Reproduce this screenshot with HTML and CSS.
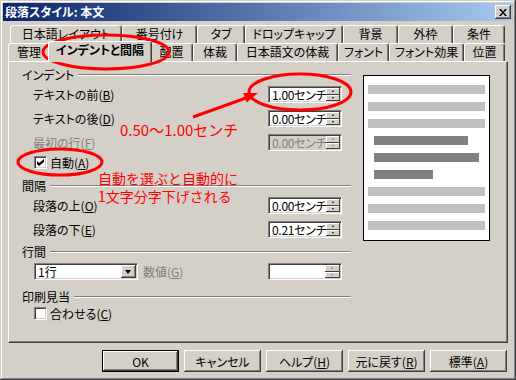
FILE: index.html
```html
<!DOCTYPE html>
<html>
<head>
    <meta charset="utf-8">
    <link rel="stylesheet" href="styles.css">
</head>

<body>

<div class="window">

    <div class="titlebar">
        <span class="title">段落スタイル: 本文</span>
        <button class="close">
            <svg width="8" height="7" viewBox="0 0 8 7"><path d="M0 0h2l2 2.5 2-2.5h2l-3 3.5 3 3.5h-2l-2-2.5-2 2.5h-2l3-3.5z" fill="#000"/></svg>
        </button>
    </div>

    <!-- TABS -->
    <div class="tabs">
        <div class="tabrow back">
            <div class="tab">日本語レイアウト</div>
            <div class="tab">番号付け</div>
            <div class="tab">タブ</div>
            <div class="tab">ドロップキャップ</div>
            <div class="tab">背景</div>
            <div class="tab">外枠</div>
            <div class="tab">条件</div>
        </div>
        <div class="tabrow front">
            <div class="tab">管理</div>
            <div class="tab selected">インデントと間隔</div>
            <div class="tab">配置</div>
            <div class="tab">体裁</div>
            <div class="tab">日本語文の体裁</div>
            <div class="tab">フォント</div>
            <div class="tab">フォント効果</div>
            <div class="tab">位置</div>
        </div>
    </div>

    <div class="panel">
        <div class="settings">

            <div class="heading"><span>インデント</span><i class="etch"></i></div>
            <div class="row first">
                <span class="label">テキストの前(<u>B</u>)</span>
                <div class="spin"><span class="value">1.00センチ</span><span class="arrows"><b></b><b></b></span></div>
            </div>
            <div class="row">
                <span class="label">テキストの後(<u>D</u>)</span>
                <div class="spin"><span class="value">0.00センチ</span><span class="arrows"><b></b><b></b></span></div>
            </div>
            <div class="row">
                <span class="label off">最初の行(<u>F</u>)</span>
                <div class="spin disabled"><span class="value">0.00センチ</span><span class="arrows"><b></b><b></b></span></div>
            </div>
            <div class="check-row auto">
                <span class="checkbox">
                    <svg width="7" height="7" viewBox="0 0 7 7"><path d="M0 2l2 2 5-4v3l-5 4-2-2z" fill="#000"/></svg>
                </span>
                <span class="label">自動(<u>A</u>)</span>
            </div>

            <div class="heading spaced"><span>間隔</span><i class="etch"></i></div>
            <div class="row first">
                <span class="label">段落の上(<u>O</u>)</span>
                <div class="spin"><span class="value">0.00センチ</span><span class="arrows"><b></b><b></b></span></div>
            </div>
            <div class="row">
                <span class="label">段落の下(<u>E</u>)</span>
                <div class="spin"><span class="value">0.21センチ</span><span class="arrows"><b></b><b></b></span></div>
            </div>

            <div class="heading"><span>行間</span><i class="etch"></i></div>
            <div class="row first combo-row">
                <div class="combo"><span class="value">1行</span><span class="drop"></span></div>
                <span class="label off">数値(<u>G</u>)</span>
                <div class="spin blank"><span class="value"></span><span class="arrows"><b></b><b></b></span></div>
            </div>

            <div class="heading spaced"><span>印刷見当</span><i class="etch"></i></div>
            <div class="check-row register">
                <span class="checkbox"></span>
                <span class="label">合わせる(<u>C</u>)</span>
            </div>
        </div>

        <!-- PREVIEW -->
        <div class="preview">
            <i class="bar"></i>
            <i class="bar"></i>
            <i class="bar"></i>
            <i class="bar dark long"></i>
            <i class="bar dark longer"></i>
            <i class="bar dark short"></i>
            <i class="bar"></i>
            <i class="bar"></i>
            <i class="bar"></i>
        </div>
    </div>

    <div class="buttons">
        <button class="btn default">OK</button>
        <button class="btn">キャンセル</button>
        <button class="btn">ヘルプ(<u>H</u>)</button>
        <button class="btn">元に戻す(<u>R</u>)</button>
        <button class="btn">標準(<u>A</u>)</button>
    </div>

    <!-- RED NOTES -->
    <svg class="marks" width="516" height="380" viewBox="0 0 516 380">
        <ellipse cx="106" cy="52" rx="63" ry="17"/>
        <ellipse cx="300" cy="92" rx="51" ry="18"/>
        <ellipse cx="60" cy="162" rx="42" ry="13"/>
        <line x1="193" y1="117" x2="246" y2="98"/>
        <polygon class="head" points="258,93 246.6,102.5 243.2,93.1"/>
    </svg>
    <div class="note range">0.50～1.00センチ</div>
    <div class="note auto-note">自動を選ぶと自動的に<br>1文字分字下げされる</div>

</div>

</body>
</html>
```

FILE: styles.css
```css
body {
    margin: 0;
    background-color: #d4d0c8;
    font-family: "Noto Sans CJK JP", sans-serif;
    font-size: 12px;
    font-feature-settings: "palt";
    color: #000;
}

u {
    text-decoration: underline;
    text-underline-offset: 1px;
}

.window {
    position: relative;
    width: 516px;
    height: 380px;
    box-sizing: border-box;
    padding: 3px;
    background-color: #d4d0c8;
    box-shadow: inset -1px -1px #404040, inset 1px 1px #d4d0c8,
                inset -2px -2px #808080, inset 2px 2px #fff;
}

.titlebar {
    height: 18px;
    display: flex;
    align-items: center;
    padding-left: 2px;
    background: linear-gradient(to right, #0a246a, #a6caf0);
}

.title {
    color: #fff;
    font-weight: bold;
    line-height: 18px;
}

.close {
    margin-left: auto;
    margin-right: 2px;
    width: 16px;
    height: 14px;
    padding: 0;
    border: none;
    display: flex;
    align-items: center;
    justify-content: center;
    background-color: #d4d0c8;
    box-shadow: inset -1px -1px #404040, inset 1px 1px #fff, inset -2px -2px #808080;
}

/* tabs */
.tabs {
    margin-top: 4px;
}

.tabrow {
    display: grid;
    height: 18px;
}

.tabrow.back {
    margin-left: 7px;
    grid-template-columns: 112px 75px 48px 98px 55px 55px 52px;
}

.tabrow.front {
    margin-left: 5px;
    grid-template-columns: 42px 100px 43px 44px 101px 51px 75px 41px;
}

.tab {
    box-sizing: border-box;
    height: 18px;
    border: 1px solid #fff;
    border-right-color: #404040;
    border-bottom: none;
    border-radius: 3px 3px 0 0;
    box-shadow: inset -1px 0 #808080;
    text-align: center;
    line-height: 16px;
    white-space: nowrap;
    background-color: #d4d0c8;
}

.tab.selected {
    position: relative;
    z-index: 1;
    height: 21px;
    margin: -2px -2px 0;
    font-weight: bold;
}

/* panel */
.panel {
    margin: 0 5px;
    height: 282px;
    box-sizing: border-box;
    display: flex;
    align-items: flex-start;
    padding: 6px 0 0 13px;
    border: 1px solid #fff;
    border-right-color: #404040;
    border-bottom-color: #404040;
    box-shadow: inset -1px -1px #808080;
}

.settings {
    width: 329px;
    display: flex;
    flex-direction: column;
}

.heading {
    height: 14px;
    line-height: 14px;
    display: flex;
    align-items: center;
    margin-top: 7px;
}

.heading:first-child {
    margin-top: 0;
}

.heading.spaced {
    margin-top: 10px;
}

.etch {
    flex: 1;
    margin-left: 4px;
    height: 0;
    border-top: 1px solid #808080;
    border-bottom: 1px solid #fff;
}

.row {
    height: 17px;
    display: flex;
    align-items: center;
    margin-top: 7px;
    padding: 0 9px 0 11px;
}

.row.first {
    margin-top: 4px;
}

.label {
    flex: 1;
    white-space: nowrap;
}

.off {
    color: #808080;
}

.spin {
    width: 74px;
    height: 17px;
    box-sizing: border-box;
    display: flex;
    padding: 1px;
    background-color: #fff;
    border: 1px solid #808080;
    border-right-color: #fff;
    border-bottom-color: #fff;
    box-shadow: inset 1px 1px #404040, inset -1px -1px #d4d0c8;
}

.spin .value {
    flex: 1;
    padding-left: 2px;
    line-height: 13px;
    white-space: nowrap;
    letter-spacing: -0.3px;
}

.spin.disabled {
    background-color: #d4d0c8;
}

.spin.disabled .value {
    color: #808080;
}

.arrows {
    width: 15px;
    display: flex;
    flex-direction: column;
}

.arrows b {
    flex: 1;
    position: relative;
    background-color: #d4d0c8;
    box-shadow: inset -1px -1px #404040, inset 1px 1px #fff;
}

.arrows b::after {
    content: "";
    position: absolute;
    left: 6px;
    top: 2px;
    border-left: 1.5px solid transparent;
    border-right: 1.5px solid transparent;
    border-bottom: 2px solid #000;
}

.arrows b + b::after {
    border-bottom: none;
    border-top: 2px solid #000;
}

.spin.disabled .arrows b::after,
.spin.blank .arrows b::after {
    border-bottom-color: #808080;
    border-top-color: #808080;
}

/* combo */
.combo-row {
    padding-left: 12px;
}

.combo-row .label {
    flex: none;
    margin-left: 5px;
    margin-right: auto;
}

.combo {
    width: 104px;
    height: 17px;
    box-sizing: border-box;
    display: flex;
    padding: 1px;
    background-color: #fff;
    border: 1px solid #808080;
    border-right-color: #fff;
    border-bottom-color: #fff;
    box-shadow: inset 1px 1px #404040, inset -1px -1px #d4d0c8;
}

.combo .value {
    flex: 1;
    padding-left: 2px;
    line-height: 13px;
}

.drop {
    width: 15px;
    position: relative;
    background-color: #d4d0c8;
    box-shadow: inset -1px -1px #404040, inset 1px 1px #fff, inset -2px -2px #808080;
}

.drop::after {
    content: "";
    position: absolute;
    left: 4px;
    top: 5px;
    border-left: 3.5px solid transparent;
    border-right: 3.5px solid transparent;
    border-top: 4px solid #000;
}

/* checkboxes */
.check-row {
    display: flex;
    align-items: center;
    height: 13px;
    padding-left: 12px;
    gap: 3px;
}

.check-row.auto {
    margin-top: 5px;
}

.check-row.register {
    margin-top: 3px;
}

.checkbox {
    width: 13px;
    height: 13px;
    box-sizing: border-box;
    display: flex;
    align-items: center;
    justify-content: center;
    background-color: #fff;
    border: 1px solid #808080;
    border-right-color: #fff;
    border-bottom-color: #fff;
    box-shadow: inset 1px 1px #404040, inset -1px -1px #d4d0c8;
}

/* preview */
.preview {
    width: 127px;
    height: 166px;
    box-sizing: border-box;
    margin: 7px 0 0 12px;
    padding: 9px 4px 0;
    display: flex;
    flex-direction: column;
    gap: 8px;
    background-color: #fff;
    border: 1px solid #000;
}

.bar {
    height: 9px;
    background-color: #c0c0c0;
}

.bar.dark {
    background-color: #808080;
    margin-left: 6px;
}

.bar.long {
    width: 94px;
}

.bar.longer {
    width: 105px;
}

.bar.short {
    width: 59px;
}

/* buttons */
.buttons {
    margin-top: 7px;
    display: flex;
    justify-content: flex-end;
    gap: 5px;
    padding-right: 6px;
}

.btn {
    width: 77px;
    height: 22px;
    padding: 0;
    border: none;
    font: inherit;
    color: #000;
    background-color: #d4d0c8;
    box-shadow: inset -1px -1px #404040, inset 1px 1px #fff, inset -2px -2px #808080;
}

.btn.default {
    border: 1px solid #000;
}

/* red notes */
.marks {
    position: absolute;
    left: 0;
    top: 0;
    pointer-events: none;
}

.marks ellipse,
.marks line {
    fill: none;
    stroke: #f00;
    stroke-width: 3;
}

.marks .head {
    fill: #f00;
}

.note {
    position: absolute;
    color: #f00;
    font-feature-settings: normal;
    white-space: nowrap;
}

.range {
    left: 120px;
    top: 121px;
    font-size: 15px;
    line-height: 18px;
}

.auto-note {
    left: 98px;
    top: 169px;
    font-size: 14px;
    line-height: 18px;
}
```
